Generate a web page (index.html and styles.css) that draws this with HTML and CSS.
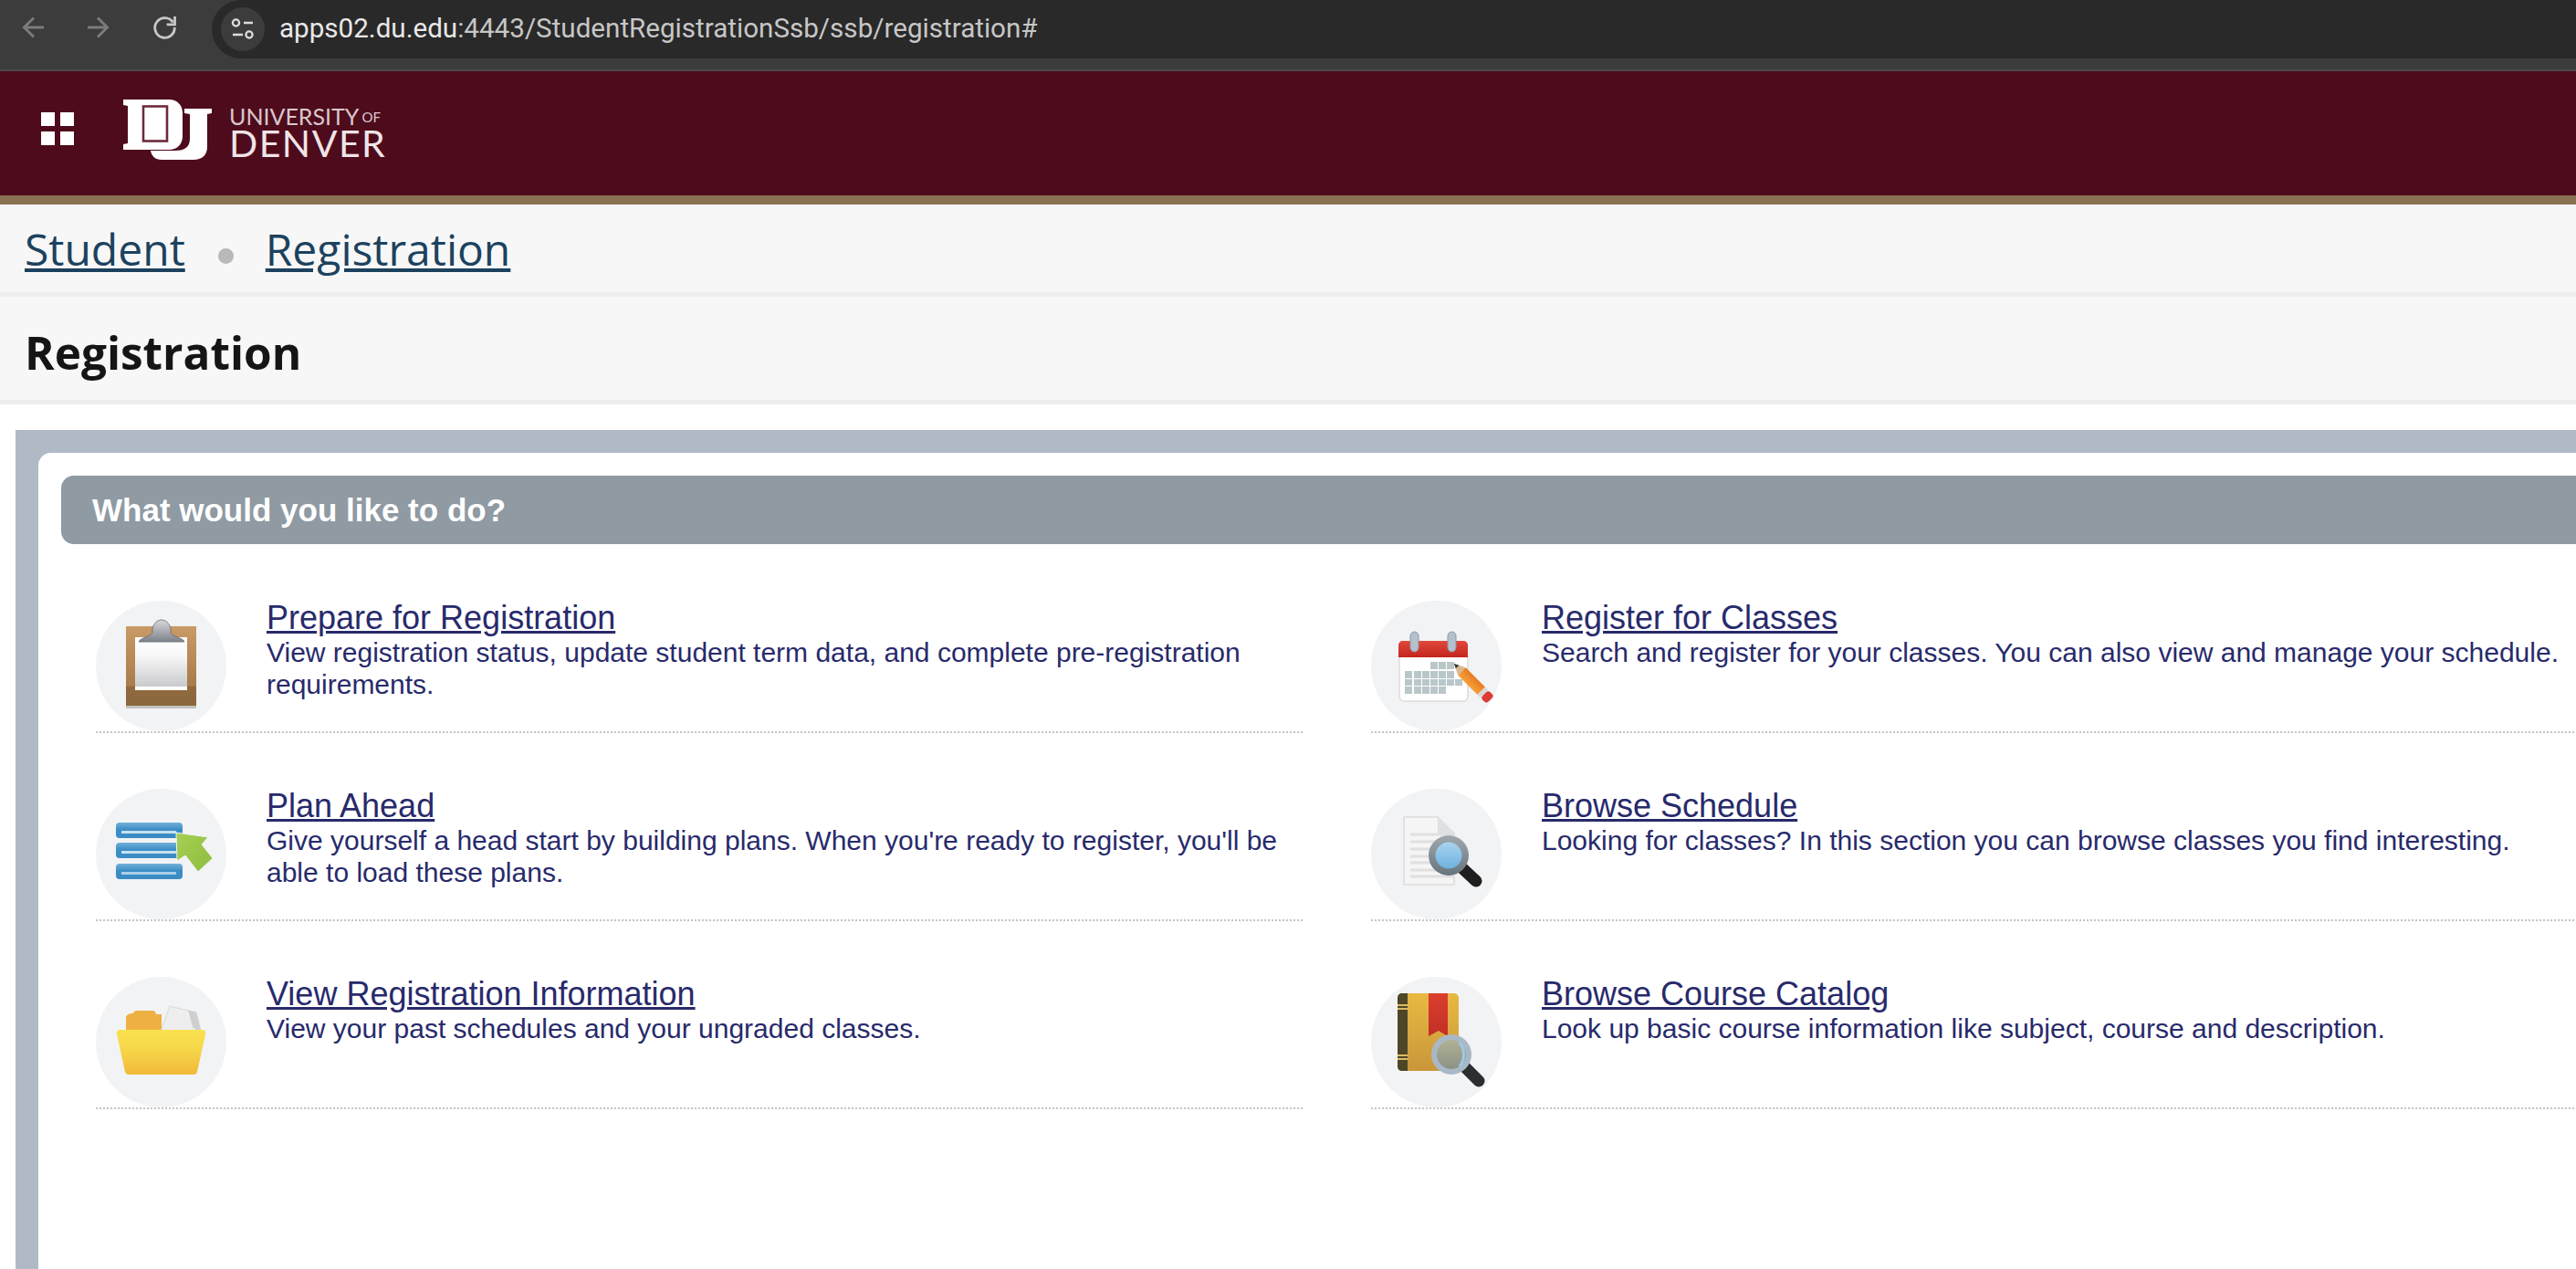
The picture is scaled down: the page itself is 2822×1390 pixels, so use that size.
FILE: index.html
```html
<!DOCTYPE html>
<html lang="en">

<head>
    <meta charset="UTF-8">
    <title>Registration</title>
    <link rel="stylesheet" href="styles.css">
</head>

<body>
    <div class="toolbar">
        <div class="nav-icons">
            <svg class="nav-icon" viewBox="0 0 24 24"><path d="M24 12H3M13 1.500 2.500 12 13 22.500" fill="none" stroke="#7b7b7b" stroke-width="3"/></svg>
            <svg class="nav-icon" viewBox="0 0 24 24"><path d="M0 12h21M11 1.500 21.500 12 11 22.500" fill="none" stroke="#7b7b7b" stroke-width="3"/></svg>
            <svg class="nav-icon" viewBox="0 0 24 24"><path d="M21.500 6.500A10.800 10.800 0 1 0 23.300 12" fill="none" stroke="#c8c8c8" stroke-width="2.800"/><path d="M23.500 0v8.800h-8.800" fill="none" stroke="#c8c8c8" stroke-width="2.800"/></svg>
        </div>
        <div class="omnibox">
            <div class="site-info">
                <svg viewBox="0 0 26 26" width="26" height="26"><circle cx="5.500" cy="6" r="3.600" fill="none" stroke="#dcdcdc" stroke-width="2.300"/><path d="M14 6h10M2 19h11" stroke="#dcdcdc" stroke-width="2.300"/><circle cx="20" cy="19" r="3.600" fill="none" stroke="#dcdcdc" stroke-width="2.300"/></svg>
            </div>
            <span class="url"><span class="url-host">apps02.du.edu</span>:4443/StudentRegistrationSsb/ssb/registration#</span>
        </div>
    </div>

    <header class="brand-bar">
        <div class="app-grid"><i></i><i></i><i></i><i></i></div>
        <svg class="logo-mark" viewBox="0 0 97 67">
            <path fill="#fff" d="M0 1h50c9 0 15 6 15 15v25c0 9-6 15-15 15H0v-6l5-1V8L0 7z"/>
            <rect x="22" y="8.500" width="26" height="38" fill="#fff" stroke="#6d2a3b" stroke-width="2.600"/>
            <path fill="#fff" d="M67 11h30v5l-5 1v36c0 9-6 14-15 14H42c-7 0-11-4-12-10h27c9 0 16-3 16-13V17l-6-1z"/>
        </svg>
        <div class="wordmark">
            <div class="wordmark-top">UNIVERSITY<span>OF</span></div>
            <div class="wordmark-name">DENVER</div>
        </div>
    </header>

    <nav class="crumbs">
        <a href="#">Student</a>
        <span class="crumb-dot"></span>
        <a href="#">Registration</a>
    </nav>

    <div class="page-title">
        <h1>Registration</h1>
    </div>

    <main class="panel">
        <div class="card">
            <h2 class="card-head">What would you like to do?</h2>
            <div class="actions">

                <div class="action">
                    <div class="action-icon">
                        <svg viewBox="0 0 143 143">
                            <defs>
                                <linearGradient id="board" x1="0" y1="0" x2="0" y2="1"><stop offset="0" stop-color="#c99a66"/><stop offset=".75" stop-color="#a87c4b"/><stop offset=".76" stop-color="#8f6a3e"/><stop offset="1" stop-color="#8a673c"/></linearGradient>
                                <linearGradient id="sheet" x1="0" y1="0" x2="0" y2="1"><stop offset="0" stop-color="#fff"/><stop offset=".35" stop-color="#f6f6f6"/><stop offset="1" stop-color="#c9cacc"/></linearGradient>
                                <linearGradient id="clip" x1="0" y1="0" x2="0" y2="1"><stop offset="0" stop-color="#d6d8db"/><stop offset="1" stop-color="#7d828a"/></linearGradient>
                            </defs>
                            <rect x="33" y="30" width="77" height="88" fill="#6f675e" opacity=".35"/>
                            <rect x="33" y="28" width="77" height="87" fill="url(#board)"/>
                            <rect x="43" y="40" width="57" height="58" fill="#fff"/>
                            <rect x="43" y="44" width="57" height="50" fill="url(#sheet)"/>
                            <path d="M47 45c2-5 13-5 15-10-1-9 5-14 10-14s11 5 10 14c2 5 13 5 15 10z" fill="url(#clip)" stroke="#666b72" stroke-width=".8"/>
                        </svg>
                    </div>
                    <div class="action-text">
                        <a href="#" class="action-link">Prepare for Registration</a>
                        <p>View registration status, update student term data, and complete pre-registration requirements.</p>
                    </div>
                </div>

                <div class="action">
                    <div class="action-icon">
                        <svg viewBox="0 0 143 143">
                            <defs>
                                <linearGradient id="bar" x1="0" y1="0" x2="0" y2="1"><stop offset="0" stop-color="#72b0d9"/><stop offset=".45" stop-color="#3d8ec6"/><stop offset="1" stop-color="#3a8bc4"/></linearGradient>
                                <linearGradient id="arrow" x1="0" y1="0" x2="1" y2="1"><stop offset="0" stop-color="#a6cf52"/><stop offset="1" stop-color="#8dbd3f"/></linearGradient>
                            </defs>
                            <rect x="22" y="37" width="73" height="17" rx="4" fill="url(#bar)"/>
                            <rect x="28" y="46" width="60" height="3" fill="#c6e0f0"/>
                            <rect x="22" y="59" width="73" height="17" rx="4" fill="url(#bar)"/>
                            <rect x="28" y="68" width="60" height="3" fill="#c6e0f0"/>
                            <rect x="22" y="82" width="73" height="17" rx="4" fill="url(#bar)"/>
                            <rect x="28" y="91" width="60" height="3" fill="#a9d0e8"/>
                            <path d="M88 48l35 5-7 8 12 15-16 15-14-18-9 6z" fill="url(#arrow)" stroke="#f2f3f5" stroke-width="1"/>
                        </svg>
                    </div>
                    <div class="action-text">
                        <a href="#" class="action-link">Plan Ahead</a>
                        <p>Give yourself a head start by building plans. When you're ready to register, you'll be able to load these plans.</p>
                    </div>
                </div>

                <div class="action">
                    <div class="action-icon">
                        <svg viewBox="0 0 143 143">
                            <defs>
                                <linearGradient id="folder" x1="0" y1="0" x2="0" y2="1"><stop offset="0" stop-color="#f9e04f"/><stop offset=".4" stop-color="#f6d84a"/><stop offset="1" stop-color="#f2b93a"/></linearGradient>
                            </defs>
                            <path d="M41 40c0-2 2-3 4-3h17c2 0 4 2 4 4h6v22H33V45c0-3 3-5 8-5z" fill="#eeb043"/>
                            <path d="M81 32l29 7 6 24H70z" fill="#eeeeee" stroke="#d8d8d8" stroke-width="1"/>
                            <path d="M101 36l9 3 6 24-10-8z" fill="#cfcfcf"/>
                            <path d="M27 58h89c3 0 5 2 4 5l-9 41c-.5 2-2 3-4 3H36c-2 0-3.500-1-4-3l-9-41c-1-3 1-5 4-5z" fill="url(#folder)"/>
                        </svg>
                    </div>
                    <div class="action-text">
                        <a href="#" class="action-link">View Registration Information</a>
                        <p>View your past schedules and your ungraded classes.</p>
                    </div>
                </div>

                <div class="action">
                    <div class="action-icon">
                        <svg viewBox="0 0 143 143">
                            <defs>
                                <linearGradient id="calred" x1="0" y1="0" x2="0" y2="1"><stop offset="0" stop-color="#e2483c"/><stop offset="1" stop-color="#c3261d"/></linearGradient>
                                <linearGradient id="pencil" x1="0" y1="0" x2="1" y2="0"><stop offset="0" stop-color="#f7a13c"/><stop offset="1" stop-color="#e87a20"/></linearGradient>
                            </defs>
                            <rect x="31" y="58" width="75" height="52" rx="5" fill="#fff" stroke="#dcdcdc" stroke-width="1.500"/>
                            <path d="M30 62V49c0-3 2-5 5-5h66c3 0 5 2 5 5v13z" fill="url(#calred)"/>
                            <rect x="43" y="34" width="9" height="22" rx="4.500" fill="#b4c0cc" stroke="#8b97a3"/>
                            <rect x="84" y="34" width="9" height="22" rx="4.500" fill="#b4c0cc" stroke="#8b97a3"/>
                            <g fill="#b9c7c9">
                                <rect x="65" y="67" width="8" height="8"/><rect x="74" y="67" width="8" height="8"/><rect x="83" y="67" width="8" height="8"/>
                                <rect x="37" y="77" width="8" height="8"/><rect x="47" y="77" width="8" height="8"/><rect x="56" y="77" width="8" height="8"/><rect x="65" y="77" width="8" height="8"/><rect x="74" y="77" width="8" height="8"/><rect x="83" y="77" width="8" height="8"/>
                                <rect x="37" y="86" width="8" height="7"/><rect x="47" y="86" width="8" height="7"/><rect x="56" y="86" width="8" height="7"/><rect x="65" y="86" width="8" height="7"/><rect x="74" y="86" width="8" height="7"/><rect x="83" y="86" width="8" height="7"/><rect x="92" y="86" width="8" height="7"/>
                                <rect x="37" y="94" width="8" height="8"/><rect x="47" y="94" width="8" height="8"/><rect x="56" y="94" width="8" height="8"/><rect x="65" y="94" width="8" height="8"/><rect x="74" y="94" width="8" height="8"/>
                            </g>
                            <g transform="rotate(-45 91 69)">
                                <path d="M91 69l-6 12h12z" fill="#d6b98e"/>
                                <path d="M91 69l-2.500 5h5z" fill="#333"/>
                                <rect x="85" y="81" width="12" height="30" fill="url(#pencil)"/>
                                <rect x="85" y="111" width="12" height="5" fill="#d8d8d8"/>
                                <rect x="85" y="116" width="12" height="9" rx="3.500" fill="#dc3a33"/>
                            </g>
                        </svg>
                    </div>
                    <div class="action-text">
                        <a href="#" class="action-link">Register for Classes</a>
                        <p>Search and register for your classes. You can also view and manage your schedule.</p>
                    </div>
                </div>

                <div class="action">
                    <div class="action-icon">
                        <svg viewBox="0 0 143 143">
                            <defs>
                                <linearGradient id="lens" x1="0" y1="0" x2="0" y2="1"><stop offset="0" stop-color="#a9d2ee"/><stop offset="1" stop-color="#6fb2df"/></linearGradient>
                                <linearGradient id="rim" x1="0" y1="0" x2="0" y2="1"><stop offset="0" stop-color="#9fa9ae"/><stop offset="1" stop-color="#66747c"/></linearGradient>
                            </defs>
                            <path d="M36 31h37l18 18v56H36z" fill="#f5f5f5" stroke="#dcdcdc" stroke-width="1.500"/>
                            <path d="M73 31l18 18H73z" fill="#dfe0e1"/>
                            <path d="M43 50h48M43 58h48M43 66h48M43 74h48M43 81h48M43 89h48M43 96h48" stroke="#e0e0e0" stroke-width="3"/>
                            <path d="M100 87l15 14" stroke="#1f1f1f" stroke-width="13" stroke-linecap="round"/>
                            <circle cx="85" cy="73" r="22" fill="url(#rim)"/>
                            <circle cx="85" cy="73" r="14.500" fill="url(#lens)"/>
                        </svg>
                    </div>
                    <div class="action-text">
                        <a href="#" class="action-link">Browse Schedule</a>
                        <p>Looking for classes? In this section you can browse classes you find interesting.</p>
                    </div>
                </div>

                <div class="action">
                    <div class="action-icon">
                        <svg viewBox="0 0 143 143">
                            <defs>
                                <linearGradient id="cover" x1="0" y1="0" x2="0" y2="1"><stop offset="0" stop-color="#e9b942"/><stop offset="1" stop-color="#c9973a"/></linearGradient>
                                <linearGradient id="ribbon" x1="0" y1="0" x2="0" y2="1"><stop offset="0" stop-color="#dc3f2d"/><stop offset="1" stop-color="#c12f26"/></linearGradient>
                                <linearGradient id="glass" x1="0" y1="0" x2="0" y2="1"><stop offset="0" stop-color="#b0b294"/><stop offset="1" stop-color="#8c9285"/></linearGradient>
                            </defs>
                            <rect x="29" y="18" width="67" height="85" rx="5" fill="url(#cover)"/>
                            <path d="M34 18h6v85h-6c-3 0-5-2-5-5V23c0-3 2-5 5-5z" fill="#4d4628"/>
                            <path d="M29 31h11M29 35h11M29 86h11M29 90h11" stroke="#d9bc64" stroke-width="2"/>
                            <path d="M63 18h21v47l-10-6-11 6z" fill="url(#ribbon)"/>
                            <path d="M104 100l14 14" stroke="#2b2d2f" stroke-width="13" stroke-linecap="round"/>
                            <circle cx="88" cy="85" r="22" fill="#a9b8c6"/>
                            <circle cx="88" cy="85" r="16" fill="url(#glass)"/>
                            <path d="M97 72c6 7 6 19 0 26" fill="none" stroke="#9cc9ea" stroke-width="3"/>
                        </svg>
                    </div>
                    <div class="action-text">
                        <a href="#" class="action-link">Browse Course Catalog</a>
                        <p>Look up basic course information like subject, course and description.</p>
                    </div>
                </div>

            </div>
        </div>
    </main>
</body>

</html>
```

FILE: styles.css
```css
html,
body {
    height: 100%;
}

body {
    margin: 0;
    overflow: hidden;
    background: #fff;
    font-family: "Liberation Sans", Arial, sans-serif;
}

/* browser bar */
.toolbar {
    display: flex;
    height: 78px;
    box-sizing: border-box;
    background: #3c3c3c;
    border-bottom: 2px solid #4a4a4a;
}

.nav-icons {
    display: flex;
    align-items: flex-start;
    width: 232px;
    padding: 18px 0 0 24px;
    box-sizing: border-box;
    gap: 48px;
}

.nav-icon {
    width: 24px;
    height: 24px;
    overflow: visible;
}

.omnibox {
    flex: 1;
    display: flex;
    align-items: center;
    height: 64px;
    background: #292929;
    border-radius: 32px 0 0 32px;
    padding-left: 10px;
}

.site-info {
    display: flex;
    align-items: center;
    justify-content: center;
    width: 48px;
    height: 48px;
    border-radius: 50%;
    background: #3c3c3c;
}

.url {
    margin: 0 0 3px 16px;
    font-family: Roboto, "Liberation Sans", sans-serif;
    font-size: 29.6px;
    color: #c7c7c7;
    white-space: nowrap;
}

.url-host {
    color: #e8e8e8;
}

/* university header */
.brand-bar {
    display: flex;
    align-items: center;
    height: 146px;
    padding: 0 0 10px 45px;
    box-sizing: border-box;
    background: #4e0b1c;
    border-bottom: 10px solid #887252;
}

.app-grid {
    display: grid;
    grid-template-columns: 15px 15px;
    grid-auto-rows: 15px;
    gap: 6px;
    margin-right: 54px;
}

.app-grid i {
    background: #fff;
}

.logo-mark {
    width: 97px;
    height: 67px;
    margin-right: 19px;
}

.wordmark {
    margin-top: 5px;
    color: #efe4e7;
    font-family: Lato, sans-serif;
    font-weight: 400;
}

.wordmark-top {
    font-size: 25px;
    line-height: 24px;
    color: #d9c7cc;
}

.wordmark-top span {
    font-size: 15px;
    margin-left: 3px;
    vertical-align: 3px;
}

.wordmark-name {
    font-size: 41px;
    line-height: 33px;
    letter-spacing: 1.5px;
}

/* breadcrumbs and title */
.crumbs {
    display: flex;
    align-items: center;
    height: 101px;
    box-sizing: border-box;
    padding-left: 27px;
    background: #f7f7f7;
    border-bottom: 5px solid #eeeeee;
    font-family: "Open Sans", sans-serif;
    font-size: 48px;
}

.crumbs a {
    color: #1c425e;
}

.crumb-dot {
    width: 17px;
    height: 17px;
    margin: 16px 35px 0 36px;
    border-radius: 50%;
    background: #b9b9b9;
}

.page-title {
    display: flex;
    align-items: center;
    height: 118px;
    box-sizing: border-box;
    padding: 9px 0 0 27px;
    background: #f7f7f7;
    border-bottom: 5px solid #eeeeee;
}

.page-title h1 {
    margin: 0;
    font-family: "Open Sans", sans-serif;
    font-size: 49.5px;
    font-weight: 700;
    color: #151515;
}

/* main panel */
.panel {
    margin: 28px 0 0 17px;
    padding: 25px 0 0 25px;
    height: 900px;
    background: #b0bac6;
}

.card {
    height: 100%;
    padding: 25px 0 0 25px;
    background: #fff;
    border-radius: 14px 0 0 0;
}

.card-head {
    margin: 0;
    height: 75px;
    line-height: 75px;
    padding-left: 34px;
    background: #8f9aa3;
    border-radius: 14px 0 0 14px;
    color: #fff;
    font-size: 35px;
    font-weight: bold;
}

.actions {
    display: grid;
    grid-template-rows: repeat(3, auto);
    grid-auto-flow: column;
    grid-template-columns: 1322px 1322px;
    column-gap: 75px;
    row-gap: 61px;
    margin: 62px 0 0 38px;
}

.action {
    display: flex;
    height: 145px;
    box-sizing: border-box;
    border-bottom: 2px dotted #c4c4c4;
}

.action-icon {
    width: 143px;
    height: 143px;
    flex-shrink: 0;
    margin-right: 44px;
    border-radius: 50%;
    background: #f2f3f5;
}

/* the source icons are soft, scaled up bitmaps */
.action-icon svg {
    display: block;
    width: 143px;
    height: 143px;
    filter: blur(.6px);
}

.action-text {
    color: #282a6b;
}

.action-link {
    display: block;
    margin-bottom: 1px;
    font-size: 36px;
    line-height: 38px;
    color: #282a6b;
}

.action-text p {
    margin: 0;
    font-size: 30px;
    line-height: 35px;
}
```
